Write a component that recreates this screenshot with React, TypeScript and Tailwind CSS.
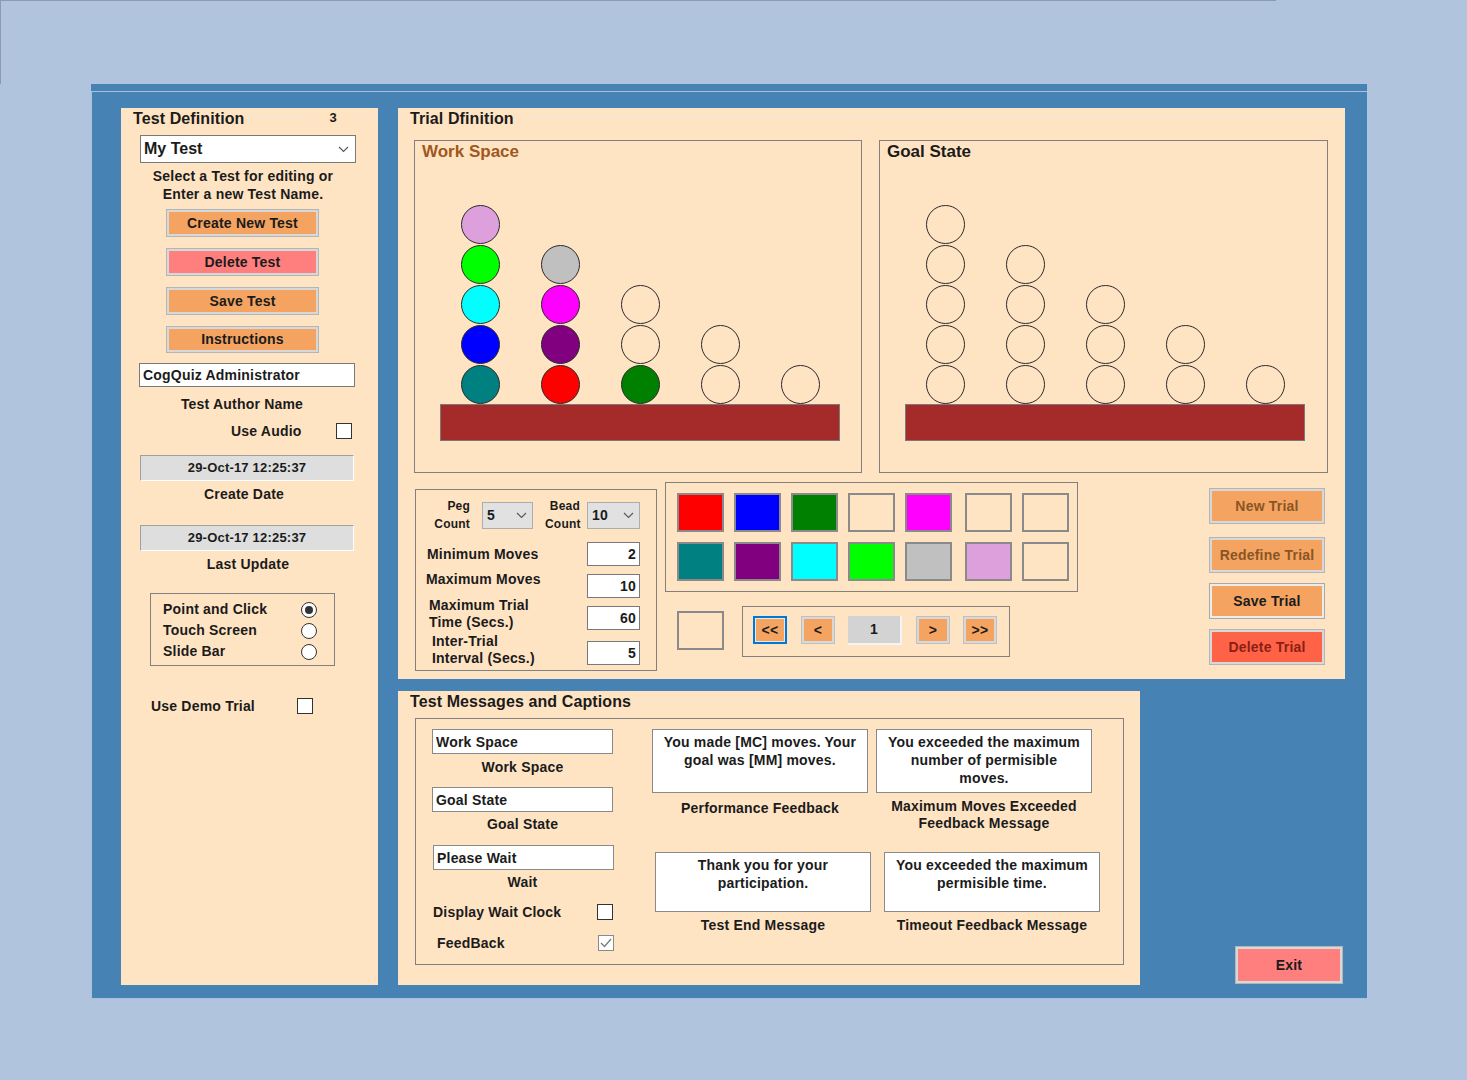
import React from 'react'

const E = ''

const workPegs: string[][] = [
  ['bg-[#008080]', 'bg-[#0000ff]', 'bg-[#00ffff]', 'bg-[#00ff00]', 'bg-[#dda0dd]'],
  ['bg-[#ff0000]', 'bg-[#800080]', 'bg-[#ff00ff]', 'bg-[#c0c0c0]'],
  ['bg-[#008000]', E, E],
  [E, E],
  [E],
]

const goalPegs: string[][] = [5, 4, 3, 2, 1].map(n => Array(n).fill(E))

const swatchRows: string[][] = [
  ['bg-[#ff0000]', 'bg-[#0000ff]', 'bg-[#008000]', E, 'bg-[#ff00ff]', E, E],
  ['bg-[#008080]', 'bg-[#800080]', 'bg-[#00ffff]', 'bg-[#00ff00]', 'bg-[#c0c0c0]', 'bg-[#dda0dd]', E],
]

function Chevron() {
  return (
    <svg width="11" height="7" viewBox="0 0 11 7">
      <polyline points="1,1 5.5,5.5 10,1" fill="none" stroke="#5a5a5a" strokeWidth="1.2" />
    </svg>
  )
}

function Bead({ color }: { color: string }) {
  return <div className={`w-[39px] h-[39px] rounded-full border-[1.5px] border-[#2a2a2a] ${color || 'bg-transparent'}`} />
}

function Board({ title, titleColor, pegs, w }: { title: string; titleColor: string; pegs: string[][]; w: string }) {
  return (
    <div className={`flex flex-col h-[333px] border border-[#808080] ${w}`}>
      <div className={`pl-[7px] pt-[1px] text-[17px] leading-[20px] tracking-normal ${titleColor}`}>{title}</div>
      <div className="mt-auto ml-[25px] mb-[31px]">
        <div className="flex items-end w-[400px]">
          {pegs.map((col, i) => (
            <div key={i} className="w-[80px] flex flex-col-reverse items-center gap-[1px]">
              {col.map((c, j) => <Bead key={j} color={c} />)}
            </div>
          ))}
        </div>
        <div className="w-[400px] h-[37px] bg-[#a52a2a] border border-[#7a7a7a]" />
      </div>
    </div>
  )
}

function Btn({ label, fill, text = 'text-[#1b1b1b]', className = '' }: { label: string; fill: string; text?: string; className?: string }) {
  return (
    <button type="button" className={`flex items-center justify-center border border-[#b5b5b5] shadow-[inset_0_0_0_2px_#d8d8d8] ${fill} ${text} ${className}`}>
      {label}
    </button>
  )
}

function Check({ checked = false, muted = false }: { checked?: boolean; muted?: boolean }) {
  return (
    <div className={`w-[16px] h-[16px] shrink-0 bg-white border flex items-center justify-center ${muted ? 'border-[#8a8a8a]' : 'border-[#333]'}`}>
      {checked && (
        <svg width="12" height="10" viewBox="0 0 12 10">
          <polyline points="1,5 4.5,8.5 11,1" fill="none" stroke="#7a7a7a" strokeWidth="1.3" />
        </svg>
      )}
    </div>
  )
}

function Radio({ on = false }: { on?: boolean }) {
  return (
    <div className="w-[16px] h-[16px] rounded-full bg-white border border-[#333] flex items-center justify-center">
      {on && <div className="w-[8px] h-[8px] rounded-full bg-[#333]" />}
    </div>
  )
}

function Swatch({ color, className = '' }: { color: string; className?: string }) {
  return <div className={`w-[47px] h-[39px] border-2 border-[#8a8a8a] ${color} ${className}`} />
}

function NavBtn({ label, focus = false }: { label: string; focus?: boolean }) {
  return (
    <button
      type="button"
      className={`w-[34px] h-[28px] flex items-center justify-center bg-[#f4a460] text-[14px] ${
        focus ? 'border-2 border-[#0078d7] shadow-[inset_0_0_0_1px_#e8e8e8]' : 'border border-[#c0c0c0] shadow-[inset_0_0_0_2px_#d8d8d8]'
      }`}
    >
      {label}
    </button>
  )
}

function NumBox({ value }: { value: string }) {
  return (
    <input
      readOnly
      defaultValue={value}
      className="w-[53px] h-[24px] bg-white border border-[#7a7a7a] text-right pr-[3px] text-[14px] font-bold outline-none"
    />
  )
}

function DropBox({ value, w }: { value: string; w: string }) {
  return (
    <div className={`h-[27px] bg-[#e1e1e1] border border-[#adadad] flex items-center justify-between pl-[4px] pr-[5px] text-[14px] ${w}`}>
      <span>{value}</span>
      <Chevron />
    </div>
  )
}

function Legend({ title, lead = 'w-[10px]' }: { title: string; lead?: string }) {
  return (
    <div className="flex items-center h-[18px]">
      <div className={`h-px bg-[#ece7e1] ${lead}`} />
      <span className="ml-[2px] text-[16px] tracking-[0.1px] translate-y-[2px]">{title}</span>
      <div className="ml-[4px] flex-1 h-px bg-[#ece7e1]" />
    </div>
  )
}

function MsgCell({ text, label, h, labelMt }: { text: string; label: React.ReactNode; h: string; labelMt: string }) {
  return (
    <div className="flex flex-col items-center w-[216px]">
      <textarea
        readOnly
        defaultValue={text}
        className={`w-full ${h} resize-none overflow-hidden bg-white border border-[#8a8a8a] text-center px-[8px] pt-[3px] leading-[18px] text-[14px] font-bold outline-none`}
      />
      <div className={`text-center leading-[17px] ${labelMt}`}>{label}</div>
    </div>
  )
}

export default function App() {
  return (
    <div className="min-h-[1080px] w-full bg-[#b0c4de] font-['Liberation_Sans',Arial,sans-serif] font-bold text-[14px] text-[#1b1b1b] tracking-[0.2px]">
      <div className="h-[84px] w-[1276px] border-l border-t border-[#8d9ab0]" />

      <div className="ml-[91px] w-[1276px]">
        <div className="h-[7px] bg-[#4682b4]" />
        <div className="h-px bg-[#a9c1da]" />
        <div className="flex h-[907px] bg-[#4682b4] border-l border-b border-[#a9c1da] pl-[29px] pt-[16px]">
          {/* Test Definition */}
          <div className="w-[257px] h-[877px] bg-[#ffe4c4] flex flex-col shrink-0">
            <div className="flex items-center h-[18px]">
              <div className="w-[11px] h-px bg-[#ece7e1]" />
              <span className="ml-[1px] text-[16px] tracking-[0.1px] translate-y-[2px]">Test Definition</span>
              <div className="ml-[4px] flex-1 h-px bg-[#ece7e1]" />
              <span className="ml-[18px] text-[13px] translate-y-[1px]">3</span>
              <div className="ml-[19px] w-[22px] h-px bg-[#ece7e1]" />
            </div>

            <div className="mt-[9px] ml-[19px] w-[216px] h-[28px] bg-white border border-[#7a7a7a] flex items-center justify-between pl-[3px] pr-[6px]">
              <span className="text-[16px] tracking-normal">My Test</span>
              <Chevron />
            </div>

            <div className="mt-[4px] ml-[14px] w-[216px] text-center leading-[18px]">
              Select a Test for editing or
              <br />
              Enter a new Test Name.
            </div>

            <Btn label="Create New Test" fill="bg-[#f4a460]" className="mt-[6px] ml-[45px] w-[153px] h-[28px]" />
            <Btn label="Delete Test" fill="bg-[#ff7f7f]" className="mt-[11px] ml-[45px] w-[153px] h-[28px]" />
            <Btn label="Save Test" fill="bg-[#f4a460]" className="mt-[11px] ml-[45px] w-[153px] h-[28px]" />
            <Btn label="Instructions" fill="bg-[#f4a460]" className="mt-[11px] ml-[45px] w-[153px] h-[27px]" />

            <input
              readOnly
              defaultValue="CogQuiz Administrator"
              className="mt-[10px] ml-[18px] w-[216px] h-[24px] bg-white border border-[#7a7a7a] pl-[3px] text-[14px] font-bold outline-none"
            />
            <div className="mt-[8px] ml-[13px] w-[216px] text-center leading-[18px]">Test Author Name</div>

            <div className="mt-[10px] ml-[110px] flex items-center h-[16px]">
              <span className="w-[105px] whitespace-nowrap">Use Audio</span>
              <Check />
            </div>

            <div className="mt-[16px] ml-[19px] w-[214px] h-[26px] bg-[#dedede] border-t border-l border-t-[#a0a0a0] border-l-[#a0a0a0] border-b border-r border-b-white border-r-white flex items-center justify-center text-[13px]">
              29-Oct-17 12:25:37
            </div>
            <div className="mt-[4px] ml-[16px] w-[214px] text-center leading-[18px]">Create Date</div>

            <div className="mt-[22px] ml-[19px] w-[214px] h-[26px] bg-[#dedede] border-t border-l border-t-[#a0a0a0] border-l-[#a0a0a0] border-b border-r border-b-white border-r-white flex items-center justify-center text-[13px]">
              29-Oct-17 12:25:37
            </div>
            <div className="mt-[4px] ml-[20px] w-[214px] text-center leading-[18px]">Last Update</div>

            <div className="mt-[20px] ml-[29px] w-[185px] h-[73px] border border-[#808080] pt-[5px] pl-[12px] pr-[17px]">
              <div className="flex items-center justify-between h-[21px]">
                <span>Point and Click</span>
                <Radio on />
              </div>
              <div className="flex items-center justify-between h-[21px]">
                <span>Touch Screen</span>
                <Radio />
              </div>
              <div className="flex items-center justify-between h-[21px]">
                <span>Slide Bar</span>
                <Radio />
              </div>
            </div>

            <div className="mt-[32px] ml-[30px] w-[162px] h-[16px] flex items-center justify-between">
              <span>Use Demo Trial</span>
              <Check />
            </div>
          </div>

          {/* right column */}
          <div className="ml-[20px] flex flex-col">
            {/* Trial Definition */}
            <div className="w-[947px] h-[571px] bg-[#ffe4c4] flex flex-col">
              <Legend title="Trial Dfinition" />

              <div className="mt-[14px] pl-[16px] flex gap-[17px]">
                <Board title="Work Space" titleColor="text-[#a0581e]" pegs={workPegs} w="w-[448px]" />
                <Board title="Goal State" titleColor="text-[#1b1b1b]" pegs={goalPegs} w="w-[449px]" />
              </div>

              <div className="mt-[9px] pl-[17px] flex items-start">
                {/* peg / bead settings */}
                <div className="mt-[7px] w-[242px] h-[182px] border border-[#808080] flex flex-col">
                  <div className="mt-[7px] flex items-center">
                    <div className="w-[54px] text-right text-[12px] leading-[18px]">
                      Peg
                      <br />
                      Count
                    </div>
                    <DropBox value="5" w="ml-[12px] w-[51px]" />
                    <div className="ml-[12px] w-[35px] text-right text-[12px] leading-[18px]">
                      Bead
                      <br />
                      Count
                    </div>
                    <DropBox value="10" w="ml-[7px] w-[53px]" />
                  </div>

                  <div className="mt-[9px] h-[24px] flex items-center">
                    <span className="ml-[11px]">Minimum Moves</span>
                    <div className="ml-auto mr-[16px]"><NumBox value="2" /></div>
                  </div>
                  <div className="mt-[8px] h-[24px] flex items-start">
                    <span className="ml-[10px] -mt-[4px] leading-[18px]">Maximum Moves</span>
                    <div className="ml-auto mr-[16px]"><NumBox value="10" /></div>
                  </div>
                  <div className="mt-[8px] h-[24px] flex items-start">
                    <span className="ml-[13px] -mt-[9px] leading-[17px]">
                      Maximum Trial
                      <br />
                      Time (Secs.)
                    </span>
                    <div className="ml-auto mr-[16px]"><NumBox value="60" /></div>
                  </div>
                  <div className="mt-[11px] h-[24px] flex items-start">
                    <span className="ml-[16px] -mt-[8px] leading-[17px]">
                      Inter-Trial
                      <br />
                      Interval (Secs.)
                    </span>
                    <div className="ml-auto mr-[16px]"><NumBox value="5" /></div>
                  </div>
                </div>

                {/* colours + navigation */}
                <div className="ml-[8px] flex flex-col">
                  <div className="w-[413px] h-[110px] border border-[#808080] pl-[11px] pt-[10px] flex flex-col gap-[10px]">
                    {swatchRows.map((row, r) => (
                      <div key={r} className="flex gap-[10px]">
                        {row.map((c, i) => (
                          <Swatch key={i} color={c} className={i === 5 ? 'ml-[3px]' : ''} />
                        ))}
                      </div>
                    ))}
                  </div>
                  <div className="mt-[14px] flex items-start">
                    <Swatch color="" className="ml-[12px] mt-[5px]" />
                    <div className="ml-[18px] w-[268px] h-[51px] border border-[#808080] pl-[10px] pt-[9px] flex items-start">
                      <NavBtn label="<<" focus />
                      <div className="ml-[14px]"><NavBtn label="<" /></div>
                      <div className="ml-[13px] w-[54px] h-[29px] bg-[#d3d3d3] border-b-2 border-r-2 border-[#f4f4f4] flex items-center justify-center">1</div>
                      <div className="ml-[14px]"><NavBtn label=">" /></div>
                      <div className="ml-[13px]"><NavBtn label=">>" /></div>
                    </div>
                  </div>
                </div>

                {/* trial buttons */}
                <div className="ml-auto mr-[20px] mt-[6px] flex flex-col">
                  <Btn label="New Trial" fill="bg-[#f4a460]" text="text-[#8a5526]" className="w-[116px] h-[36px]" />
                  <Btn label="Redefine Trial" fill="bg-[#f4a460]" text="text-[#8a5526]" className="mt-[13px] w-[116px] h-[36px]" />
                  <button
                    type="button"
                    className="mt-[10px] w-[116px] h-[36px] flex items-center justify-center bg-[#f4a460] border border-[#a8a8a8] shadow-[inset_0_0_0_2px_#ececec]"
                  >
                    Save Trial
                  </button>
                  <Btn label="Delete Trial" fill="bg-[#ff6347]" text="text-[#8b1e14]" className="mt-[10px] w-[116px] h-[36px]" />
                </div>
              </div>
            </div>

            {/* bottom row */}
            <div className="mt-[12px] flex items-end">
              <div className="w-[742px] h-[294px] bg-[#ffe4c4] flex flex-col">
                <Legend title="Test Messages and Captions" />

                <div className="mt-[9px] ml-[17px] w-[709px] h-[247px] border border-[#808080] flex">
                  <div className="pl-[16px] pt-[10px] flex flex-col w-[198px]">
                    <input readOnly defaultValue="Work Space" className="w-[181px] h-[25px] bg-white border border-[#8a8a8a] pl-[3px] text-[14px] font-bold outline-none" />
                    <div className="mt-[4px] w-[181px] text-center leading-[18px]">Work Space</div>
                    <input readOnly defaultValue="Goal State" className="mt-[11px] w-[181px] h-[25px] bg-white border border-[#8a8a8a] pl-[3px] text-[14px] font-bold outline-none" />
                    <div className="mt-[3px] w-[181px] text-center leading-[18px]">Goal State</div>
                    <input readOnly defaultValue="Please Wait" className="mt-[12px] ml-px w-[181px] h-[25px] bg-white border border-[#8a8a8a] pl-[3px] text-[14px] font-bold outline-none" />
                    <div className="mt-[3px] w-[181px] text-center leading-[18px]">Wait</div>
                    <div className="mt-[13px] ml-px w-[180px] h-[16px] flex items-center justify-between">
                      <span>Display Wait Clock</span>
                      <Check />
                    </div>
                    <div className="mt-[15px] ml-[5px] w-[177px] h-[16px] flex items-center justify-between">
                      <span>FeedBack</span>
                      <Check checked muted />
                    </div>
                  </div>

                  <div className="ml-[38px] pt-[10px] flex flex-col">
                    <div className="h-[123px] flex gap-[8px]">
                      <MsgCell h="h-[64px]" labelMt="mt-[7px]" text="You made [MC] moves. Your goal was [MM] moves." label="Performance Feedback" />
                      <MsgCell
                        h="h-[64px]"
                        labelMt="mt-[5px]"
                        text="You exceeded the maximum number of permisible moves."
                        label={
                          <>
                            Maximum Moves Exceeded
                            <br />
                            Feedback Message
                          </>
                        }
                      />
                    </div>
                    <div className="ml-[3px] flex gap-[13px]">
                      <MsgCell h="h-[60px]" labelMt="mt-[5px]" text="Thank you for your participation." label="Test End Message" />
                      <MsgCell h="h-[60px]" labelMt="mt-[5px]" text="You exceeded the maximum permisible time." label="Timeout Feedback Message" />
                    </div>
                  </div>
                </div>
              </div>

              <Btn label="Exit" fill="bg-[#ff7f7f]" className="ml-[95px] mb-[1px] w-[108px] h-[38px]" />
            </div>
          </div>
        </div>
      </div>
    </div>
  )
}
